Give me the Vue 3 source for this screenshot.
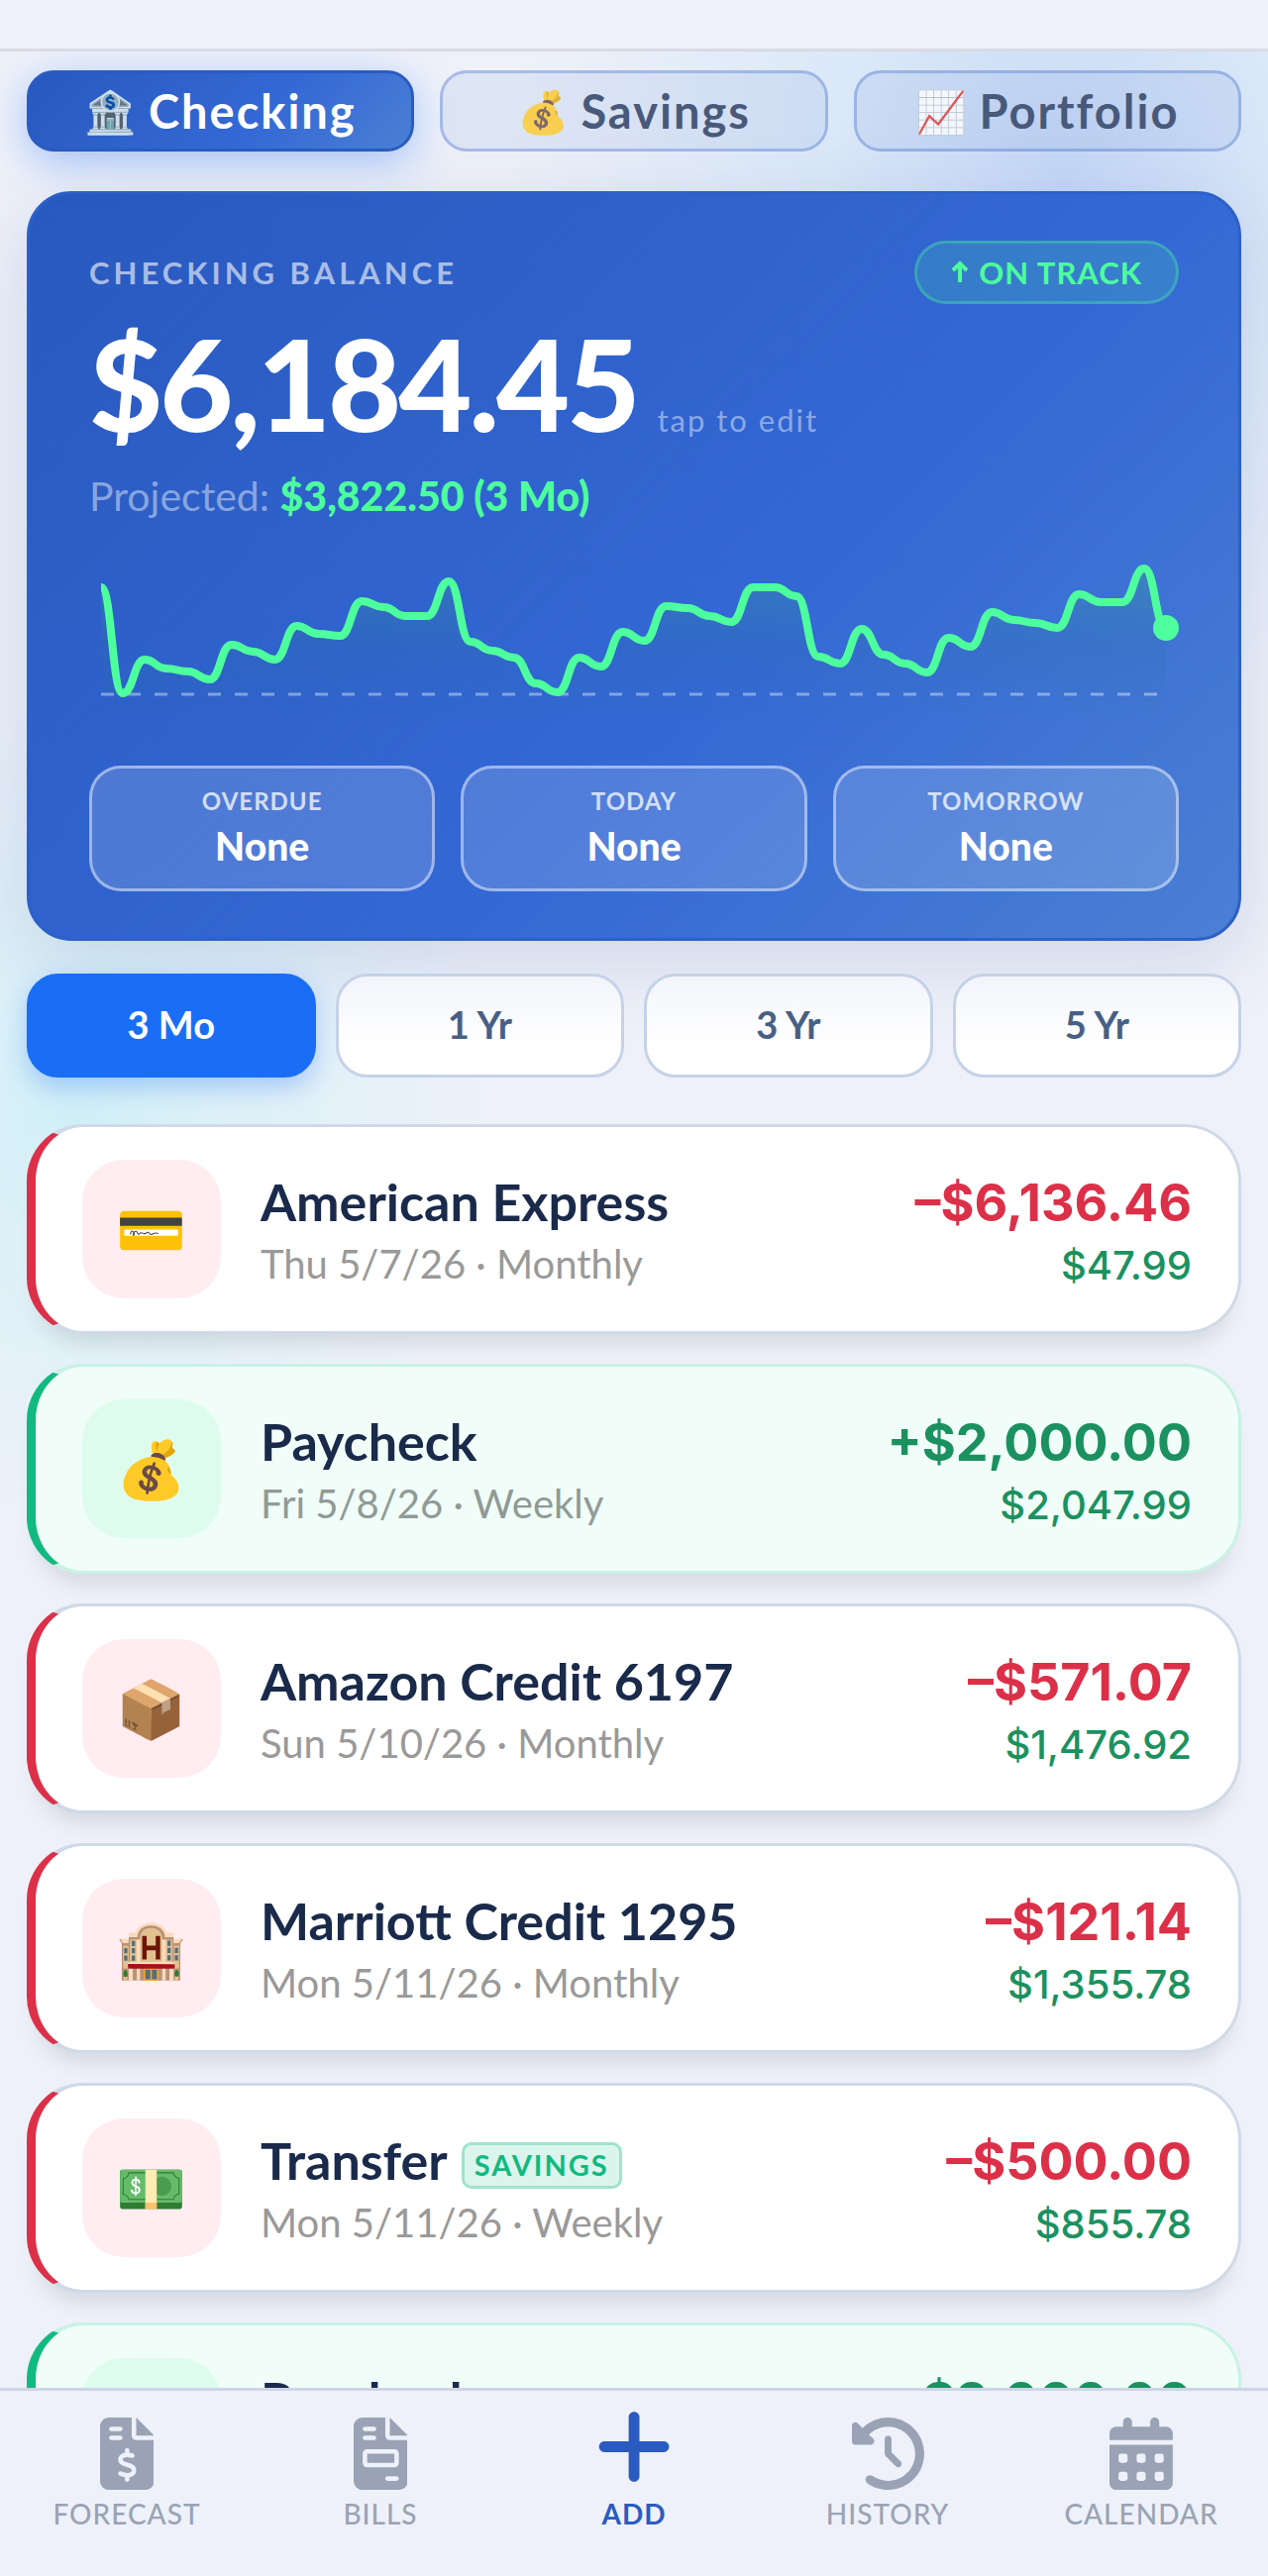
<template>
  <div class="app">
    <header class="status-bar"></header>

    <main class="content">
      <nav class="tabs" aria-label="Accounts">
        <button
          v-for="tab in tabs"
          :key="tab.label"
          type="button"
          class="tab"
          :class="{ active: tab.label === activeTab }"
          @click="activeTab = tab.label"
        >
          <span class="emoji">{{ tab.icon }}</span> {{ tab.label }}
        </button>
      </nav>

      <section class="hero">
        <div class="hero-top">
          <h2 class="hero-label">Checking Balance</h2>
          <span class="badge">
            <svg class="badge-arrow" viewBox="0 0 18 24" aria-hidden="true">
              <path d="M9 22V3M2 10l7-7 7 7" />
            </svg>
            ON TRACK
          </span>
        </div>
        <button type="button" class="balance">
          <span class="balance-value">$6,184.45</span>
          <span class="balance-hint">tap to edit</span>
        </button>
        <p class="projected">Projected: <strong>$3,822.50 (3 Mo)</strong></p>

        <svg class="chart" viewBox="0 0 1100 168" aria-hidden="true">
          <defs>
            <linearGradient id="area" x1="0" y1="0" x2="0" y2="1">
              <stop offset="0" stop-color="#3d9f9f" stop-opacity="0.4" />
              <stop offset="0.5" stop-color="#2a6fa0" stop-opacity="0.2" />
              <stop offset="1" stop-color="#2a6fa0" stop-opacity="0" />
            </linearGradient>
          </defs>
          <path :d="areaPath" fill="url(#area)" />
          <line class="chart-zero" x1="12" y1="139" x2="1087" y2="139" />
          <path class="chart-line" :d="linePath" />
          <circle class="chart-dot" :cx="endX" :cy="values[values.length - 1]" r="13" />
        </svg>

        <div class="due">
          <div v-for="item in due" :key="item.label" class="due-card">
            <span class="due-label">{{ item.label }}</span>
            <span class="due-value">{{ item.value }}</span>
          </div>
        </div>
      </section>

      <div class="ranges">
        <button
          v-for="range in ranges"
          :key="range"
          type="button"
          class="range"
          :class="{ active: range === activeRange }"
          @click="activeRange = range"
        >
          {{ range }}
        </button>
      </div>

      <ul class="list">
        <li v-for="(row, i) in rows" :key="i" class="row" :class="row.type">
          <span class="row-icon emoji">{{ row.icon }}</span>
          <div class="row-main">
            <div class="row-title">
              {{ row.title }}
              <span v-if="row.tag" class="tag">{{ row.tag }}</span>
            </div>
            <div class="row-sub">{{ row.date }} · {{ row.repeat }}</div>
          </div>
          <div class="row-side">
            <div class="row-amount">{{ row.amount }}</div>
            <div class="row-balance">{{ row.balance }}</div>
          </div>
        </li>
      </ul>
    </main>

    <nav class="bottom-nav" aria-label="Main">
      <a
        v-for="link in links"
        :key="link.label"
        href="#"
        class="nav-link"
        :class="{ primary: link.primary }"
      >
        <svg :viewBox="`0 0 ${link.width} 512`" aria-hidden="true">
          <path :d="link.path" fill-rule="evenodd" />
        </svg>
        <span>{{ link.label }}</span>
      </a>
    </nav>
  </div>
</template>

<script setup>
import { computed, ref } from 'vue';

const activeTab = ref('Checking');
const activeRange = ref('3 Mo');

const tabs = [
  { icon: '🏦', label: 'Checking' },
  { icon: '💰', label: 'Savings' },
  { icon: '📈', label: 'Portfolio' },
];

const due = [
  { label: 'Overdue', value: 'None' },
  { label: 'Today', value: 'None' },
  { label: 'Tomorrow', value: 'None' },
];

const ranges = ['3 Mo', '1 Yr', '3 Yr', '5 Yr'];

const rows = [
  { type: 'expense', icon: '💳', title: 'American Express', date: 'Thu 5/7/26', repeat: 'Monthly', amount: '–$6,136.46', balance: '$47.99' },
  { type: 'income', icon: '💰', title: 'Paycheck', date: 'Fri 5/8/26', repeat: 'Weekly', amount: '+$2,000.00', balance: '$2,047.99' },
  { type: 'expense', icon: '📦', title: 'Amazon Credit 6197', date: 'Sun 5/10/26', repeat: 'Monthly', amount: '–$571.07', balance: '$1,476.92' },
  { type: 'expense', icon: '🏨', title: 'Marriott Credit 1295', date: 'Mon 5/11/26', repeat: 'Monthly', amount: '–$121.14', balance: '$1,355.78' },
  { type: 'expense', icon: '💵', title: 'Transfer', tag: 'Savings', date: 'Mon 5/11/26', repeat: 'Weekly', amount: '–$500.00', balance: '$855.78' },
  { type: 'income', icon: '💰', title: 'Paycheck', date: 'Fri 5/15/26', repeat: 'Weekly', amount: '+$2,000.00', balance: '$2,855.78' },
];

// chart y values, top of the svg is 0
const values = [
  31, 138, 104, 113, 116, 124, 89, 96, 104, 70, 78, 80, 45, 51, 60, 60, 25, 86, 95, 102,
  128, 137, 102, 111, 76, 85, 50, 52, 60, 66, 31, 31, 40, 101, 108, 73, 99, 108, 117, 82,
  91, 56, 64, 67, 72, 38, 46, 46, 12, 72,
];
const startX = 12;
const endX = 1087;

const linePath = computed(() => {
  const step = (endX - startX) / (values.length - 1);
  let d = `M${startX} ${values[0]}`;
  for (let i = 1; i < values.length; i++) {
    const x = startX + step * i;
    const mid = x - step / 2;
    d += `C${mid} ${values[i - 1]} ${mid} ${values[i]} ${x} ${values[i]}`;
  }
  return d;
});
const areaPath = computed(() => `${linePath.value}V168H${startX}Z`);

const filePath =
  'M64 0C28.7 0 0 28.7 0 64V448c0 35.3 28.7 64 64 64H320c35.3 0 64-28.7 64-64V160H256c-17.7 0-32-14.3-32-32V0H64zM256 0V128H384L256 0zM64 80c0-8.8 7.2-16 16-16h64c8.8 0 16 7.2 16 16s-7.2 16-16 16H80c-8.8 0-16-7.2-16-16zm0 64c0-8.8 7.2-16 16-16h64c8.8 0 16 7.2 16 16s-7.2 16-16 16H80c-8.8 0-16-7.2-16-16z';

const links = [
  {
    label: 'Forecast',
    width: 384,
    path: filePath + 'M192 216c8.8 0 16 7.2 16 16v17.3c8.5 1.2 16.7 3.1 24.1 5.1c8.5 2.3 13.6 11 11.3 19.6s-11 13.6-19.6 11.3c-11.1-3-22-5.2-32.1-5.3c-8.4-.1-17.4 1.8-23.6 5.5c-5.7 3.4-8.1 7.3-8.1 12.8c0 3.7 1.3 6.5 7.3 10.1c6.9 4.1 16.6 7.1 29.2 10.9l.5 .1c11.3 3.4 25.3 7.6 36.3 14.6c12.1 7.6 22.4 19.7 22.7 38.2c.3 19.3-9.6 33.3-22.9 41.6c-7.7 4.8-16.4 7.6-25.1 9.1V440c0 8.8-7.2 16-16 16s-16-7.2-16-16V422.2c-11.2-2.1-21.7-5.7-30.9-8.9c-2.1-.7-4.2-1.4-6.2-2.1c-8.4-2.8-12.9-11.9-10.1-20.2s11.9-12.9 20.2-10.1c2.5 .8 4.8 1.6 7.1 2.4c13.6 4.6 24.6 8.4 36.3 8.7c9.1 .3 17.9-1.7 23.7-5.3c5.1-3.2 7.9-7.3 7.8-14c-.1-4.6-1.8-7.8-7.7-11.6c-6.8-4.3-16.5-7.4-29-11.2l-1.6-.5c-11-3.3-24.3-7.3-34.8-13.7c-12-7.2-22.6-18.9-22.7-37.3c-.1-19.4 10.8-32.8 23.8-40.5c7.5-4.4 15.8-7.2 24.1-8.7V232c0-8.8 7.2-16 16-16z',
  },
  {
    label: 'Bills',
    width: 384,
    path: filePath + 'M96 224H288c17.7 0 32 14.3 32 32v64c0 17.7-14.3 32-32 32H96c-17.7 0-32-14.3-32-32V256c0-17.7 14.3-32 32-32zm0 32v64H288V256H96zM240 416h64c8.8 0 16 7.2 16 16s-7.2 16-16 16H240c-8.8 0-16-7.2-16-16s7.2-16 16-16z',
  },
  {
    label: 'Add',
    width: 448,
    primary: true,
    path: 'M256 80c0-17.7-14.3-32-32-32s-32 14.3-32 32V224H48c-17.7 0-32 14.3-32 32s14.3 32 32 32H192V432c0 17.7 14.3 32 32 32s32-14.3 32-32V288H400c17.7 0 32-14.3 32-32s-14.3-32-32-32H256V80z',
  },
  {
    label: 'History',
    width: 512,
    path: 'M75 75L41 41C25.9 25.9 0 36.6 0 57.9V168c0 13.3 10.7 24 24 24H134.1c21.4 0 32.1-25.9 17-41l-30.8-30.8C155 85.5 203 64 256 64c106 0 192 86 192 192s-86 192-192 192c-40.8 0-78.6-12.7-109.7-34.4c-14.5-10.1-34.4-6.6-44.6 7.9s-6.6 34.4 7.9 44.6C151.2 495 201.7 512 256 512c141.4 0 256-114.6 256-256S397.4 0 256 0C185.3 0 121.3 28.7 75 75zm181 53c-13.3 0-24 10.7-24 24V256c0 6.4 2.5 12.5 7 17l72 72c9.4 9.4 24.6 9.4 33.9 0s9.4-24.6 0-33.9l-65-65V152c0-13.3-10.7-24-24-24z',
  },
  {
    label: 'Calendar',
    width: 448,
    path: 'M128 0c17.7 0 32 14.3 32 32V64H288V32c0-17.7 14.3-32 32-32s32 14.3 32 32V64h48c26.5 0 48 21.5 48 48v48H0V112C0 85.5 21.5 64 48 64H96V32c0-17.7 14.3-32 32-32zM0 192H448V464c0 26.5-21.5 48-48 48H48c-26.5 0-48-21.5-48-48V192zm64 80v32c0 8.8 7.2 16 16 16h32c8.8 0 16-7.2 16-16V272c0-8.8-7.2-16-16-16H80c-8.8 0-16 7.2-16 16zm128 0v32c0 8.8 7.2 16 16 16h32c8.8 0 16-7.2 16-16V272c0-8.8-7.2-16-16-16H208c-8.8 0-16 7.2-16 16zm144-16c-8.8 0-16 7.2-16 16v32c0 8.8 7.2 16 16 16h32c8.8 0 16-7.2 16-16V272c0-8.8-7.2-16-16-16H336zM64 400v32c0 8.8 7.2 16 16 16h32c8.8 0 16-7.2 16-16V400c0-8.8-7.2-16-16-16H80c-8.8 0-16 7.2-16 16zm144-16c-8.8 0-16 7.2-16 16v32c0 8.8 7.2 16 16 16h32c8.8 0 16-7.2 16-16V400c0-8.8-7.2-16-16-16H208zm112 16v32c0 8.8 7.2 16 16 16h32c8.8 0 16-7.2 16-16V400c0-8.8-7.2-16-16-16H336c-8.8 0-16 7.2-16 16z',
  },
];
</script>

<style>
body {
  background: #eef1f9;
}
</style>

<style scoped>
.app {
  display: flex;
  flex-direction: column;
  height: 100vh;
  box-sizing: border-box;
  overflow: hidden;
  font-family: Lato, 'Noto Color Emoji', sans-serif;
  color: #1a2a4a;
  background:
    radial-gradient(circle at 84% 7%, rgba(196, 215, 246, 1) 0, rgba(214, 230, 248, 0.8) 240px, rgba(214, 230, 248, 0) 560px),
    radial-gradient(circle at 6% 43%, rgba(208, 239, 247, 1) 0, rgba(212, 240, 247, 0.8) 100px, rgba(212, 240, 247, 0) 430px),
    #eef1f9;
}

.app *,
.app *::before {
  box-sizing: border-box;
}

button {
  font: inherit;
  cursor: pointer;
}

.status-bar {
  flex: none;
  height: 52px;
  background: #eef1f9;
  border-bottom: 3px solid #d8dbe3;
}

.content {
  flex: 1;
  min-height: 0;
  overflow-y: auto;
  scrollbar-width: none;
  padding: 19px 27px 0;
}

.tabs {
  display: flex;
  gap: 26px;
}

.tab {
  flex: 1;
  display: flex;
  align-items: center;
  justify-content: center;
  gap: 12px;
  height: 82px;
  border: 3px solid rgba(42, 91, 192, 0.3);
  border-radius: 27px;
  background: rgba(42, 91, 192, 0.08);
  color: #48597a;
  font-size: 47px;
  font-weight: 700;
  letter-spacing: 2px;
}

.tab .emoji {
  letter-spacing: 0;
  font-size: 42px;
  opacity: 0.8;
}

.tab.active {
  color: #fff;
  border-color: #2a5bc0;
  background: linear-gradient(135deg, #2859be, #3468d5 60%, #4a80d4);
  box-shadow: 0 10px 40px rgba(26, 110, 245, 0.35);
}

.tab.active .emoji {
  opacity: 1;
}

.hero {
  margin-top: 40px;
  padding: 47px 60px;
  border: 3px solid #2d60c8;
  border-radius: 45px;
  background: linear-gradient(135deg, #2859be, #3468d5 60%, #4a80d4);
  box-shadow: 0 20px 80px rgba(42, 70, 150, 0.16);
}

.hero-top {
  display: flex;
  align-items: center;
  justify-content: space-between;
}

.hero-label {
  margin: 0;
  color: rgba(255, 255, 255, 0.6);
  font-size: 31px;
  font-weight: 700;
  letter-spacing: 4px;
  text-transform: uppercase;
}

.badge {
  display: flex;
  align-items: center;
  gap: 10px;
  height: 64px;
  padding: 0 34px;
  border: 3px solid rgba(77, 255, 157, 0.3);
  border-radius: 32px;
  background: rgba(77, 255, 157, 0.15);
  color: #4dff9d;
  font-size: 31px;
  font-weight: 700;
  letter-spacing: 1px;
}

.badge-arrow {
  width: 18px;
  height: 24px;
  fill: none;
  stroke: currentColor;
  stroke-width: 4;
}

.balance {
  display: flex;
  align-items: baseline;
  gap: 20px;
  margin-top: 2px;
  padding: 0;
  border: 0;
  background: none;
  color: #fff;
}

.balance-value {
  font-size: 128px;
  font-weight: 900;
  line-height: 156px;
  letter-spacing: -3px;
}

.balance-hint {
  color: rgba(255, 255, 255, 0.45);
  font-size: 31px;
  letter-spacing: 2px;
}

.projected {
  margin: 10px 0 0;
  color: rgba(255, 255, 255, 0.45);
  font-size: 41px;
  line-height: 52px;
}

.projected strong {
  color: #4dff9d;
  font-weight: 900;
}

.chart {
  display: block;
  width: 100%;
  margin-top: 35px;
  overflow: visible;
}

.chart-line {
  fill: none;
  stroke: #4dff9d;
  stroke-width: 8;
  stroke-linejoin: round;
}

.chart-zero {
  stroke: rgba(255, 255, 255, 0.4);
  stroke-width: 3;
  stroke-dasharray: 13 14;
}

.chart-dot {
  fill: #4dff9d;
}

.due {
  display: flex;
  gap: 26px;
  margin-top: 43px;
}

.due-card {
  flex: 1;
  display: flex;
  flex-direction: column;
  align-items: center;
  gap: 4px;
  padding: 17px 0 18px;
  border: 3px solid rgba(255, 255, 255, 0.45);
  border-radius: 32px;
  background: rgba(255, 255, 255, 0.15);
  color: #fff;
}

.due-label {
  font-size: 24px;
  font-weight: 700;
  line-height: 32px;
  letter-spacing: 1px;
  text-transform: uppercase;
  opacity: 0.75;
}

.due-value {
  font-size: 39px;
  font-weight: 900;
  line-height: 50px;
}

.ranges {
  display: flex;
  gap: 20px;
  margin-top: 33px;
}

.range {
  flex: 1;
  height: 105px;
  padding: 0 0 3px;
  border: 3px solid #c5d2e8;
  border-radius: 32px;
  background: linear-gradient(#f3f5fb, #fff 70%);
  color: #486085;
  font-size: 38px;
  font-weight: 700;
}

.range.active {
  border-color: #1a6ef5;
  background: #1a6ef5;
  color: #fff;
  box-shadow: 0 10px 24px rgba(26, 110, 245, 0.3);
}

.list {
  display: flex;
  flex-direction: column;
  gap: 30px;
  margin: 47px 0 0;
  padding: 0;
  list-style: none;
}

.row {
  display: flex;
  align-items: center;
  gap: 40px;
  padding: 33px 47px;
  border: 3px solid #d0d9e8;
  border-left: 9px solid #dc3049;
  border-radius: 57px;
  background: #fff;
  box-shadow: 0 20px 20px -10px rgba(0, 0, 0, 0.1);
}

.row.income {
  border-color: #c8f2e4;
  border-left-color: #12b981;
  background: #f0fdf9;
}

.row-icon {
  flex: none;
  display: flex;
  align-items: center;
  justify-content: center;
  width: 140px;
  height: 140px;
  border-radius: 42px;
  background: #ffedf1;
  font-size: 57px;
}

.income .row-icon {
  background: #defcee;
}

.row-main {
  flex: 1;
  min-width: 0;
  padding-top: 4px;
}

.row-title,
.row-amount {
  font-size: 52px;
  line-height: 66px;
}

.row-title {
  display: flex;
  align-items: center;
  gap: 14px;
  font-weight: 700;
}

.tag {
  display: inline-flex;
  align-items: center;
  height: 47px;
  margin-top: 10px;
  padding: 0 10px;
  border: 3px solid #9fe3ca;
  border-radius: 10px;
  background: #dcf5ec;
  color: #12b981;
  font-size: 29px;
  letter-spacing: 2px;
  text-transform: uppercase;
}

.row-sub {
  color: #999;
  font-size: 40px;
  line-height: 60px;
}

.income .row-sub {
  color: #909a96;
}

.row-side {
  padding-top: 8px;
  font-family: Inter, sans-serif;
  text-align: right;
}

.row-amount {
  color: #dc3049;
  font-weight: 700;
}

.income .row-amount {
  color: #1b9160;
}

.row-balance {
  color: #1b9160;
  font-size: 40px;
  font-weight: 500;
  line-height: 60px;
}

.bottom-nav {
  flex: none;
  display: flex;
  align-items: flex-end;
  height: 190px;
  padding-bottom: 45px;
  border-top: 3px solid #cdd5e5;
  background: #eef1f9;
}

.nav-link {
  flex: 1;
  display: flex;
  flex-direction: column;
  align-items: center;
  gap: 6px;
  color: #9aa3b5;
  font-size: 28px;
  font-weight: 500;
  line-height: 36px;
  letter-spacing: 1px;
  text-decoration: none;
  text-transform: uppercase;
}

.nav-link svg {
  height: 73px;
  fill: currentColor;
}

.nav-link.primary {
  color: #2a5bc0;
  font-weight: 700;
}

.nav-link.primary svg {
  height: 87px;
}
</style>
